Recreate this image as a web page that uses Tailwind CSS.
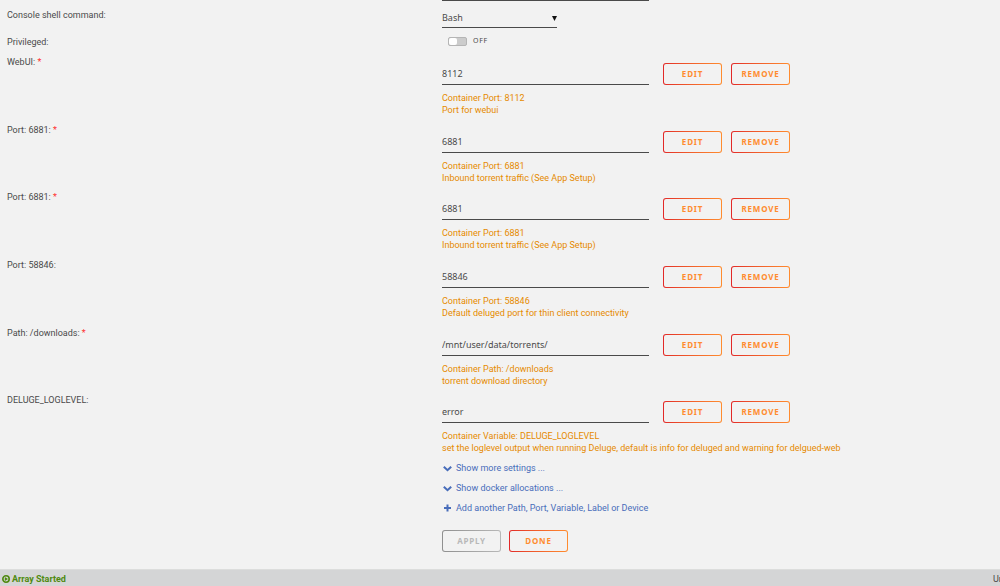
<!DOCTYPE html>
<html lang="en">
<head>
<meta charset="utf-8">
<title>Update Container</title>
<meta name="viewport" content="width=device-width, initial-scale=1">
<script src="https://cdn.jsdelivr.net/npm/@tailwindcss/browser@4"></script>
</head>
<body class="flex min-h-screen flex-col overflow-x-hidden bg-[#f2f2f2] font-[Roboto,'Noto_Sans',sans-serif] text-[9px] leading-3 text-[#4a4a4a]">
<main class="grow">
  <div class="grid grid-cols-[44%_1fr]">
    <div></div>
    <div class="px-0.5"><div class="w-[207px] border-b border-[#4a4a4a]"></div></div>
  </div>
  <div class="grid grid-cols-[44%_1fr]">
    <label for="shell" class="pt-2 pl-[7px]">Console shell command:</label>
    <div class="px-0.5 pt-2">
      <div class="relative w-[115px] border-b border-[#4a4a4a]">
        <select id="shell" class="block h-[18px] w-full appearance-none bg-transparent font-['Noto_Sans',sans-serif]"><option>Bash</option><option>Shell</option></select>
        <svg class="pointer-events-none absolute top-[7px] right-0 size-[5px]" viewBox="0 0 5 5"><path d="M0 0h5L2.5 5z" fill="#111"/></svg>
      </div>
    </div>
  </div>
  <div class="grid h-6 grid-cols-[44%_1fr]">
    <label for="priv" class="pt-2 pl-[7px]">Privileged:</label>
    <label class="flex h-5 items-center gap-1.5 pt-1.5 pl-2">
      <input id="priv" type="checkbox" class="peer sr-only">
      <span class="flex h-[9px] w-[19px] rounded-xs border border-[#b5b5b5] bg-[#cccccc]"><span class="h-full w-2 rounded-xs bg-white"></span></span>
      <span class="font-['Noto_Sans',sans-serif] text-[7px] tracking-widest">OFF</span>
    </label>
  </div>

  <div id="rows" class="grid min-h-[406px] auto-rows-fr"></div>

  <div class="grid grid-cols-[44%_1fr]">
    <div></div>
    <div class="px-0.5">
      <div class="flex flex-col items-start leading-5 text-[#486dba]">
        <a href="#" class="flex items-center gap-1"><svg class="ml-px size-[9px]" viewBox="0 0 9 9" fill="none" stroke="currentColor" stroke-width="2"><path d="M.8 2.7 4.5 6.2 8.2 2.7"/></svg>Show more settings ...</a>
        <a href="#" class="flex items-center gap-1"><svg class="ml-px size-[9px]" viewBox="0 0 9 9" fill="none" stroke="currentColor" stroke-width="2"><path d="M.8 2.7 4.5 6.2 8.2 2.7"/></svg>Show docker allocations ...</a>
        <a href="#" class="flex items-center gap-1"><svg class="ml-px size-[9px]" viewBox="0 0 9 9" fill="none" stroke="currentColor" stroke-width="2"><path d="M4.5 .5v7M1 4h7"/></svg>Add another Path, Port, Variable, Label or Device</a>
      </div>
      <div class="mt-3 flex gap-2 pb-4 font-['Noto_Sans',sans-serif] text-[8px] font-bold tracking-widest">
        <button disabled class="flex h-[22px] w-[59px] rounded-[3px] bg-linear-to-r from-[#909090] to-[#b8b8b8] p-px text-[#b8b8b8]"><span class="flex size-full items-center justify-center rounded-xs bg-[#f2f2f2]">APPLY</span></button>
        <button class="flex h-[22px] w-[59px] rounded-[3px] bg-linear-to-r from-[#e22828] to-[#ff8c2f] p-px text-[#ff8c2f]"><span class="flex size-full items-center justify-center rounded-xs bg-[#f2f2f2]">DONE</span></button>
      </div>
    </div>
  </div>
</main>
<footer class="flex h-[17px] items-center justify-between border-t border-[#dcdddc] bg-[#d4d5d6] pt-px pl-0.5">
  <span class="flex items-center gap-0.5 font-bold text-[#4f8a10]"><svg class="size-2" viewBox="0 0 8 8"><circle cx="4" cy="4" r="3.2" fill="none" stroke="currentColor" stroke-width="1.6"/><path d="M2.8 2 6 4 2.8 6z" fill="currentColor"/></svg>Array Started</span>
  <span class="w-[7px] overflow-hidden whitespace-nowrap">Unraid</span>
</footer>

<template id="row">
  <div class="grid grid-cols-[44%_1fr] pt-1">
    <label class="pl-[7px]"><span></span> <span class="text-[#ff3030]">*</span></label>
    <div class="px-0.5 pt-[7px]">
      <div class="flex items-center font-['Noto_Sans',sans-serif]">
        <input type="text" class="h-[22px] w-[207px] border-b border-[#4a4a4a] bg-transparent">
        <div class="ml-3.5 flex gap-[9px] text-[8px] font-bold tracking-widest text-[#ff8c2f]">
          <button class="flex h-[22px] w-[59px] rounded-[3px] bg-linear-to-r from-[#e22828] to-[#ff8c2f] p-px"><span class="flex size-full items-center justify-center rounded-xs bg-[#f2f2f2]">EDIT</span></button>
          <button class="flex h-[22px] w-[59px] rounded-[3px] bg-linear-to-r from-[#e22828] to-[#ff8c2f] p-px"><span class="flex size-full items-center justify-center rounded-xs bg-[#f2f2f2]">REMOVE</span></button>
        </div>
      </div>
      <p class="mt-[7px] text-[#e68a00]"><span></span><br><span></span></p>
    </div>
  </div>
</template>
<script>
const settings = [
  ['WebUI:', true, '8112', 'Container Port: 8112', 'Port for webui'],
  ['Port: 6881:', true, '6881', 'Container Port: 6881', 'Inbound torrent traffic (See App Setup)'],
  ['Port: 6881:', true, '6881', 'Container Port: 6881', 'Inbound torrent traffic (See App Setup)'],
  ['Port: 58846:', false, '58846', 'Container Port: 58846', 'Default deluged port for thin client connectivity'],
  ['Path: /downloads:', true, '/mnt/user/data/torrents/', 'Container Path: /downloads', 'torrent download directory'],
  ['DELUGE_LOGLEVEL:', false, 'error', 'Container Variable: DELUGE_LOGLEVEL', 'set the loglevel output when running Deluge, default is info for deluged and warning for delgued-web'],
];
const host = document.getElementById('rows');
settings.forEach(([name, required, value, target, help], i) => {
  const row = document.getElementById('row').content.cloneNode(true);
  const label = row.querySelector('label');
  const input = row.querySelector('input');
  label.htmlFor = input.id = 'setting-' + i;
  label.children[0].textContent = name;
  if (!required) label.children[1].remove();
  input.value = value;
  const lines = row.querySelectorAll('p span');
  lines[0].textContent = target;
  lines[1].textContent = help;
  host.append(row);
});
</script>
</body>
</html>
